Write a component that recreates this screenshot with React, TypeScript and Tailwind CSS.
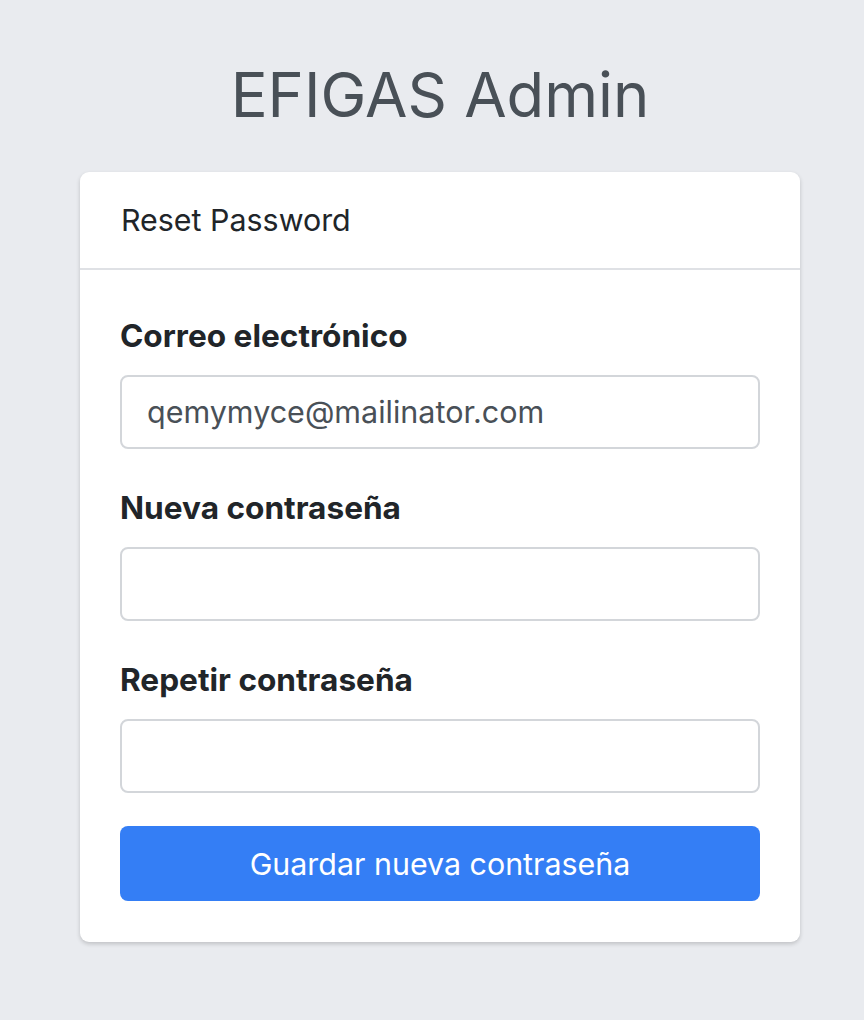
import React from "react";

export default function App() {
  const font = { fontFamily: 'Inter, "Liberation Sans", Arial, sans-serif' };
  return (
    <div
      className="min-h-[1020px] w-full bg-[#e9ebef] flex flex-col items-center pt-[58px] pl-[16px]"
      style={font}
    >
      <h1 className="text-[61.5px] leading-[74px] text-[#495057] font-normal">
        EFIGAS Admin
      </h1>
      <div className="mt-[40px] w-[720px] bg-white rounded-[9px] shadow-[0_2px_4px_rgba(0,0,0,0.18)]">
        <div className="px-[41px] py-[25px] border-b-2 border-[#dfe1e5] text-[30.4px] leading-[46px] text-[#212529]">
          Reset Password
        </div>
        <div className="px-[40px] pt-[42px] pb-[41px] flex flex-col">
          <Field label="Correo electrónico" value="qemymyce@mailinator.com" />
          <Field label="Nueva contraseña" value="" />
          <Field label="Repetir contraseña" value="" />
          <button className="mt-[-2px] h-[75px] w-full rounded-[8px] bg-[#347ef5] text-white text-[30.4px] leading-[46px]">
            Guardar nueva contraseña
          </button>
        </div>
      </div>
    </div>
  );
}

function Field({ label, value }: { label: string; value: string }) {
  return (
    <div className="mb-[35px] flex flex-col">
      <label className="text-[31.6px] leading-[47px] font-bold text-[#212529] mb-[16px]">
        {label}
      </label>
      <div className="h-[74px] w-full rounded-[8px] border-2 border-[#d3d6da] bg-white px-[25px] flex items-center text-[30.5px] text-[#495057]">
        {value}
      </div>
    </div>
  );
}
